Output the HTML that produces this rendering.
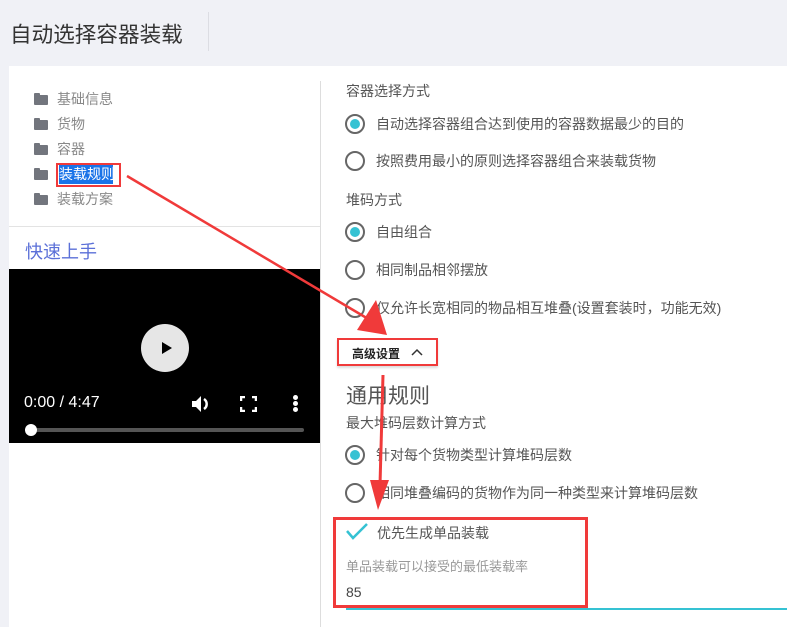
<!DOCTYPE html>
<html><head><meta charset="utf-8"><style>
*{margin:0;padding:0;box-sizing:border-box}
body{width:787px;height:627px;overflow:hidden;background:#f0f1f6;font-family:"Liberation Sans","Noto Sans CJK SC",sans-serif;position:relative}
.a{position:absolute;white-space:nowrap}
.t{font-size:14px;color:#555}
.tree{font-size:14px;color:#888}
.fold{position:absolute;width:14px;height:10px;background:#72757d;border-radius:1px}
.fold:before{content:"";position:absolute;left:0;top:-2px;width:6px;height:3px;background:#72757d;border-radius:1px 1px 0 0}
.r{position:absolute;width:20px;height:20px;border:2px solid #666;border-radius:50%}
.r.on:after{content:"";position:absolute;left:3px;top:3px;width:10px;height:10px;border-radius:50%;background:#35c2d3}
</style></head><body>
<div class="a" style="left:10px;top:18px;font-size:21.6px;color:#333">自动选择容器装载</div>
<div class="a" style="left:208px;top:12px;width:1px;height:39px;background:#dcdde3"></div>
<div class="a" style="left:9px;top:66px;width:778px;height:561px;background:#fff"></div>
<div class="a" style="left:320px;top:81px;width:1px;height:546px;background:#ddd"></div>

<div class="fold" style="left:34px;top:95px"></div><div class="a tree" style="left:57px;top:89px">基础信息</div>
<div class="fold" style="left:34px;top:120px"></div><div class="a tree" style="left:57px;top:114px">货物</div>
<div class="fold" style="left:34px;top:145px"></div><div class="a tree" style="left:57px;top:139px">容器</div>
<div class="fold" style="left:34px;top:170px"></div>
<div class="a" style="left:56px;top:163px;width:65px;height:24px;border:2px solid #f03a3a"></div>
<div class="a" style="left:59px;top:165px;width:54px;height:19px;background:#1a73e8;color:#fff;font-size:14px;line-height:19px">装载规则</div>
<div class="fold" style="left:34px;top:195px"></div><div class="a tree" style="left:57px;top:189px">装载方案</div>
<div class="a" style="left:9px;top:226px;width:311px;height:1px;background:#e3e3e3"></div>
<div class="a" style="left:25px;top:238px;font-size:18px;color:#5b70d8">快速上手</div>

<div class="a" style="left:9px;top:269px;width:311px;height:174px;background:#000"></div>
<div class="a" style="left:141px;top:324px;width:48px;height:48px;border-radius:50%;background:#e6e6e6"></div>
<div class="a" style="left:162px;top:342px;width:0;height:0;border-left:10px solid #000;border-top:6px solid transparent;border-bottom:6px solid transparent"></div>
<div class="a" style="left:24px;top:394px;font-size:16px;color:#fff">0:00 / 4:47</div>
<svg class="a" style="left:190px;top:393px" width="22" height="22" viewBox="0 0 22 22"><path d="M2 8h4l5-5v16l-5-5H2z" fill="#fff"/><path d="M14 6a6 6 0 0 1 0 10" stroke="#fff" stroke-width="2.5" fill="none"/></svg>
<svg class="a" style="left:240px;top:396px" width="17" height="16" viewBox="0 0 17 16" fill="none" stroke="#fff" stroke-width="2.5"><path d="M1 5V1h4M12 1h4v4M16 11v4h-4M5 15H1v-4"/></svg>
<div class="a" style="left:293px;top:395px;width:5px;height:5px;border-radius:50%;background:#fff;box-shadow:0 6px 0 #fff,0 12px 0 #fff"></div>
<div class="a" style="left:31px;top:428px;width:273px;height:4px;background:#555;border-radius:2px"></div>
<div class="a" style="left:25px;top:424px;width:12px;height:12px;border-radius:50%;background:#fff"></div>

<div class="a t" style="left:346px;top:81px">容器选择方式</div>
<div class="r on" style="left:345px;top:114px"></div><div class="a t" style="left:376px;top:114px">自动选择容器组合达到使用的容器数据最少的目的</div>
<div class="r" style="left:345px;top:151px"></div><div class="a t" style="left:376px;top:151px">按照费用最小的原则选择容器组合来装载货物</div>
<div class="a t" style="left:346px;top:190px">堆码方式</div>
<div class="r on" style="left:345px;top:222px"></div><div class="a t" style="left:376px;top:222px">自由组合</div>
<div class="r" style="left:345px;top:260px"></div><div class="a t" style="left:376px;top:260px">相同制品相邻摆放</div>
<div class="r" style="left:345px;top:298px"></div><div class="a t" style="left:376px;top:298px">仅允许长宽相同的物品相互堆叠(设置套装时，功能无效)</div>

<div class="a" style="left:337px;top:338px;width:101px;height:28px;border:2px solid #f03a3a;box-shadow:0 2px 2px #ddd"></div>
<div class="a" style="left:352px;top:345px;font-size:12px;color:#222;font-weight:bold">高级设置</div>
<svg class="a" style="left:411px;top:348px" width="12" height="8" viewBox="0 0 12 8"><path d="M1 7l5-5 5 5" stroke="#333" stroke-width="1.5" fill="none"/></svg>
<div class="a" style="left:346px;top:380px;font-size:21px;color:#555">通用规则</div>
<div class="a t" style="left:346px;top:413px">最大堆码层数计算方式</div>
<div class="r on" style="left:345px;top:445px"></div><div class="a t" style="left:376px;top:445px">针对每个货物类型计算堆码层数</div>
<div class="r" style="left:345px;top:483px"></div><div class="a t" style="left:376px;top:483px">相同堆叠编码的货物作为同一种类型来计算堆码层数</div>

<div class="a" style="left:333px;top:517px;width:255px;height:91px;border:3px solid #f03a3a"></div>
<svg class="a" style="left:345px;top:522px" width="24" height="18" viewBox="0 0 24 18"><path d="M2 9l6 7L22 2" stroke="#35c2d3" stroke-width="2.5" fill="none"/></svg>
<div class="a t" style="left:377px;top:523px">优先生成单品装载</div>
<div class="a" style="left:346px;top:556px;font-size:13px;color:#999">单品装载可以接受的最低装载率</div>
<div class="a" style="left:346px;top:584px;font-size:14px;color:#444">85</div>
<div class="a" style="left:346px;top:608px;width:441px;height:2px;background:#35c2d3"></div>

<svg class="a" style="left:0;top:0" width="787" height="627" viewBox="0 0 787 627">
<path d="M127 176L370 320" stroke="#f03a3a" stroke-width="2.5"/>
<polygon points="387,335 357,330 376,300" fill="#f03a3a"/>
<path d="M383 375L380 485" stroke="#f03a3a" stroke-width="3"/>
<polygon points="378,510 370,480 389,480" fill="#f03a3a"/>
</svg>
</body></html>
